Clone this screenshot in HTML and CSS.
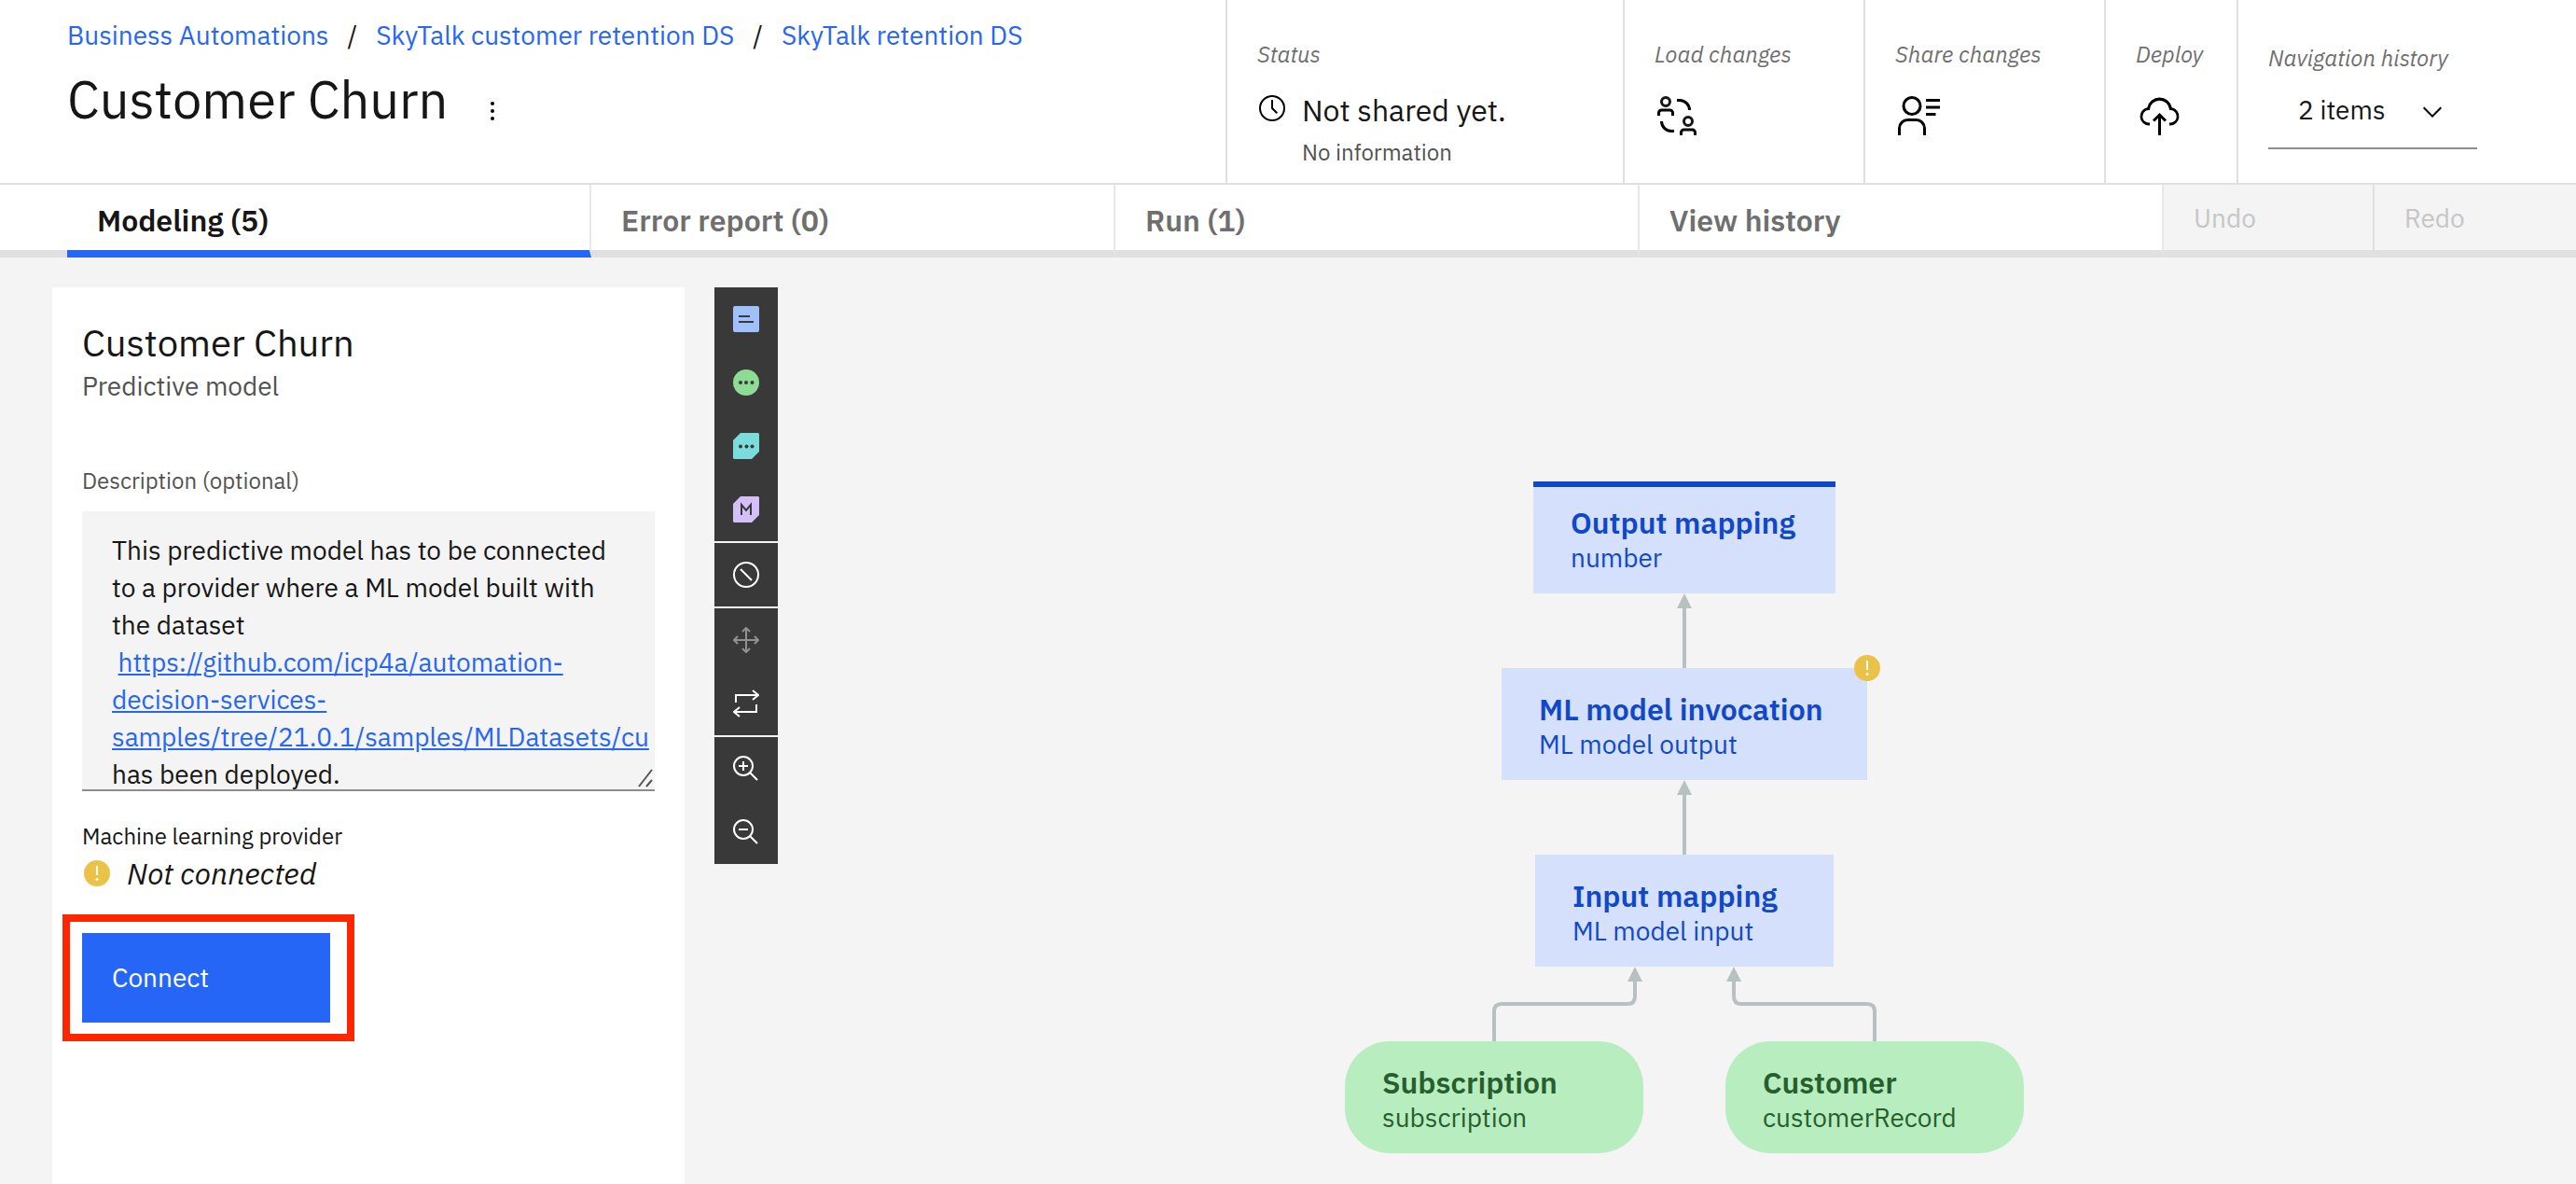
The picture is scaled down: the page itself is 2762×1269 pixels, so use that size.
FILE: index.html
```html
<!DOCTYPE html>
<html lang="en">
<head>
<meta charset="utf-8">
<title>Customer Churn</title>
<link rel="stylesheet" href="styles.css">
</head>
<body>
<header class="header">
  <div class="heading">
    <nav class="crumbs" aria-label="Breadcrumb">
      <a href="#">Business Automations</a><span>/</span><a href="#">SkyTalk customer retention DS</a><span>/</span><a href="#">SkyTalk retention DS</a>
    </nav>
    <div class="title-row">
      <h1>Customer Churn</h1>
      <button class="icon-button" type="button" aria-label="More actions">
        <svg width="32" height="32" viewBox="0 0 32 32"><circle cx="16" cy="8" r="2"/><circle cx="16" cy="16" r="2"/><circle cx="16" cy="24" r="2"/></svg>
      </button>
    </div>
  </div>
  <section class="cell cell-status">
    <h2 class="cell-label">Status</h2>
    <div class="status">
      <svg class="status-icon" width="32" height="32" viewBox="0 0 32 32"><path d="M16 30a14 14 0 1 1 14-14 14 14 0 0 1-14 14Zm0-26a12 12 0 1 0 12 12A12 12 0 0 0 16 4Z"/><path d="M20.590 22 15 16.410V7h2v8.580l5 5.010Z"/></svg>
      <span class="status-text">Not shared yet.</span>
      <span class="status-info">No information</span>
    </div>
  </section>
  <section class="cell cell-load">
    <h2 class="cell-label">Load changes</h2>
    <button class="icon-button" type="button" aria-label="Load changes">
      <svg width="48" height="48" viewBox="0 0 32 32"><path d="M26 12h-2a6 6 0 0 0-6-6h-2V4h2a8 8 0 0 1 8 8ZM4 20h2a6 6 0 0 0 6 6h2v2h-2a8 8 0 0 1-8-8Z"/><path d="M2 16v-2a3 3 0 0 1 3-3h6a3 3 0 0 1 3 3v2h-2v-2a1 1 0 0 0-1-1H5a1 1 0 0 0-1 1v2ZM18 30v-2a3 3 0 0 1 3-3h6a3 3 0 0 1 3 3v2h-2v-2a1 1 0 0 0-1-1h-6a1 1 0 0 0-1 1v2Z"/><g fill="none" stroke="#161616" stroke-width="2"><circle cx="8" cy="6" r="3"/><circle cx="24" cy="20" r="3"/></g></svg>
    </button>
  </section>
  <section class="cell cell-share">
    <h2 class="cell-label">Share changes</h2>
    <button class="icon-button" type="button" aria-label="Share changes">
      <svg width="48" height="48" viewBox="0 0 32 32"><path d="M22 4h10v2H22zM22 9h10v2H22zM22 14h7v2h-7zM12 4a5 5 0 1 1-5 5 5 5 0 0 1 5-5m0-2a7 7 0 1 0 7 7 7 7 0 0 0-7-7ZM22 30h-2v-5a5 5 0 0 0-5-5H9a5 5 0 0 0-5 5v5H2v-5a7 7 0 0 1 7-7h6a7 7 0 0 1 7 7Z"/></svg>
    </button>
  </section>
  <section class="cell cell-deploy">
    <h2 class="cell-label">Deploy</h2>
    <button class="icon-button" type="button" aria-label="Deploy">
      <svg width="48" height="48" viewBox="-1 -1 32 32"><path d="M11 18l1.410 1.410L15 16.830V29h2V16.830l2.590 2.580L21 18l-5-5-5 5Z"/><path d="M23.500 22H23v-2h.5a4.500 4.500 0 0 0 .360-9H23l-.1-.820a7 7 0 0 0-13.880 0L9 11h-.860a4.500 4.500 0 0 0 .360 9H9v2h-.5A6.500 6.500 0 0 1 7.200 9.140a9 9 0 0 1 17.600 0A6.500 6.500 0 0 1 23.500 22Z"/></svg>
    </button>
  </section>
  <section class="cell cell-history">
    <label class="cell-label" for="history">Navigation history</label>
    <div class="select">
      <select id="history"><option>2 items</option></select>
      <svg width="32" height="32" viewBox="0 0 16 16"><path d="M8 11 3 6l.7-.7L8 9.600l4.300-4.300.7.7z"/></svg>
    </div>
  </section>
</header>
<nav class="tabs">
  <button class="tab tab-active" type="button">Modeling (5)</button>
  <button class="tab" type="button">Error report (0)</button>
  <button class="tab" type="button">Run (1)</button>
  <button class="tab" type="button">View history</button>
  <button class="edit edit-undo" type="button" disabled>Undo</button>
  <button class="edit edit-redo" type="button" disabled>Redo</button>
</nav>
<main class="workspace">
  <aside class="panel">
    <h2 class="panel-title">Customer Churn</h2>
    <p class="panel-kind">Predictive model</p>
    <h3 class="field-label">Description (optional)</h3>
    <div class="description">
      This predictive model has to be connected to a provider where a ML model built with the dataset<br>&nbsp;<a href="#">https://github.com/icp4a/automation-<br>decision-services-<br>samples/tree/21.0.1/samples/MLDatasets/cu</a><br>has been deployed.
      <svg class="grip" width="16" height="20" viewBox="0 0 16 20"><path d="M1 19 15 1M9 19l6-7"/></svg>
    </div>
    <h3 class="provider-label">Machine learning provider</h3>
    <p class="provider">
      <svg width="32" height="32" viewBox="0 0 32 32"><circle class="warn" cx="16" cy="16" r="14"/><path class="warn-mark" d="M15 8h2v10h-2z"/><circle class="warn-mark" cx="16" cy="22.500" r="1.500"/></svg>
      Not connected
    </p>
    <div class="highlight"><button class="connect" type="button">Connect</button></div>
  </aside>
  <div class="toolbar" role="toolbar" aria-label="Diagram tools">
    <div class="tools">
      <button class="tool" type="button" aria-label="Decision node"><svg width="28" height="28" viewBox="0 0 28 28"><rect width="28" height="28" rx="2" fill="#a0c0fc"/><path class="ink" d="M6 10h12v2H6zM6 16h16v2H6z"/></svg></button>
      <button class="tool" type="button" aria-label="Input data node"><svg width="28" height="28" viewBox="0 0 28 28"><circle cx="14" cy="14" r="14" fill="#8edb96"/><g class="ink"><circle cx="8" cy="14" r="2"/><circle cx="14" cy="14" r="2"/><circle cx="20.500" cy="14" r="2"/></g></svg></button>
      <button class="tool" type="button" aria-label="Function node"><svg width="28" height="28" viewBox="0 0 28 28"><path fill="#7bdddb" d="M8 0h19l1 1v19l-8 8H1l-1-1V8Z"/><g class="ink"><circle cx="8" cy="14.500" r="2"/><circle cx="14.500" cy="14.500" r="2"/><circle cx="20.500" cy="14.500" r="2"/></g></svg></button>
      <button class="tool" type="button" aria-label="Predictive model node"><svg width="28" height="28" viewBox="0 0 28 28"><path fill="#d4bff8" d="M8 0h19l1 1v19l-8 8H1l-1-1V8Z"/><path d="M9 20V9l5 6 5-6v11" fill="none" stroke="#393939" stroke-width="2"/></svg></button>
    </div>
    <div class="tools">
      <button class="tool" type="button" aria-label="Disable"><svg class="line" width="28" height="28" viewBox="0 0 28 28"><circle cx="14" cy="14" r="13"/><path d="m8 8 12 12"/></svg></button>
    </div>
    <div class="tools">
      <button class="tool tool-dim" type="button" aria-label="Move"><svg class="line" width="28" height="28" viewBox="0 0 28 28"><path d="M14 1v26M1 14h26M10 5l4-4 4 4M10 23l4 4 4-4M5 10l-4 4 4 4M23 10l4 4-4 4"/></svg></button>
      <button class="tool" type="button" aria-label="Change layout"><svg class="line" width="28" height="30" viewBox="0 0 28 30"><path d="M3 14V6h24M21 1l6 5-6 5M25 16v8H1M7 19l-6 5 6 5"/></svg></button>
    </div>
    <div class="tools">
      <button class="tool" type="button" aria-label="Zoom in"><svg class="line" width="28" height="28" viewBox="0 0 28 28"><circle cx="11" cy="11" r="10"/><path d="m18 18 8 8M11 6v10M6 11h10"/></svg></button>
      <button class="tool" type="button" aria-label="Zoom out"><svg class="line" width="28" height="28" viewBox="0 0 28 28"><circle cx="11" cy="11" r="10"/><path d="m18 18 8 8M6 11h10"/></svg></button>
    </div>
  </div>
  <div class="canvas">
    <div class="diagram">
      <svg class="links" width="728" height="720" viewBox="0 0 728 720"><g class="wire"><path d="M364 200V132M364 400V332M160 600V568Q160 560 168 560H303Q311 560 311 552V532M568 600V568Q568 560 560 560H425Q417 560 417 552V532"/></g><path class="heads" d="M364 120l8 16h-16zM364 320l8 16h-16zM311 520l8 16h-16zM417 520l8 16h-16z"/></svg>
      <div class="node node-output"><strong>Output mapping</strong><span>number</span></div>
      <div class="node node-model"><strong>ML model invocation</strong><span>ML model output</span>
        <svg class="node-warning" width="32" height="32" viewBox="0 0 32 32"><circle class="warn" cx="16" cy="16" r="14"/><path class="warn-mark" d="M15 8h2v10h-2z"/><circle class="warn-mark" cx="16" cy="22.500" r="1.500"/></svg>
      </div>
      <div class="node node-input"><strong>Input mapping</strong><span>ML model input</span></div>
      <div class="node node-data node-subscription"><strong>Subscription</strong><span>subscription</span></div>
      <div class="node node-data node-customer"><strong>Customer</strong><span>customerRecord</span></div>
    </div>
  </div>
</main>
</body>
</html>
```
FILE: styles.css
```css
* { box-sizing: border-box; }
html { height: 100%; }
body {
  margin: 0;
  min-height: 100%;
  display: flex;
  flex-direction: column;
  background: #f4f4f4;
  color: #161616;
  font-family: "IBM Plex Sans", "Liberation Sans", Arial, sans-serif;
  font-size: 28px;
  line-height: 40px;
}
h1, h2, h3, p { margin: 0; font-weight: 400; }
a { color: #2566f6; }
button, select { font: inherit; color: inherit; border: 0; background: none; padding: 0; margin: 0; }
svg { display: block; flex: none; }

.header {
  display: flex;
  height: 198px;
  background: #fff;
  border-bottom: 2px solid #e0e0e0;
}
.heading { flex: 1; min-width: 0; padding: 18px 0 0 72px; white-space: nowrap; }
.crumbs { display: flex; gap: 20px; }
.crumbs a { text-decoration: none; }
.title-row { display: flex; align-items: center; gap: 32px; padding-top: 14px; }
.title-row .icon-button { padding-top: 26px; }
h1 { font-size: 56px; line-height: 68px; }
.cell { flex: none; border-left: 2px solid #e0e0e0; padding: 42px 0 0 32px; white-space: nowrap; }
.cell-status { width: 426px; }
.cell-load, .cell-share { width: 258px; }
.cell-deploy { width: 142px; }
.cell-history { width: 364px; padding-top: 46px; }
.cell-label { display: block; font-size: 24px; line-height: 32px; font-style: italic; color: #6f6f6f; }
.cell > .icon-button { display: block; padding-top: 26px; }
.status { display: grid; grid-template-columns: 48px 1fr; align-items: center; padding-top: 20px; }
.status-icon { margin-bottom: 4px; }
.status-text { font-size: 32px; line-height: 48px; }
.status-info { grid-column: 2; font-size: 24px; line-height: 42px; color: #525252; }
.select { position: relative; width: 224px; border-bottom: 2px solid #8d8d8d; }
.select select { width: 100%; height: 80px; padding-left: 32px; appearance: none; }
.select svg { position: absolute; right: 32px; top: 26px; pointer-events: none; }

.tabs {
  display: flex;
  height: 78px;
  padding-left: 72px;
  background: linear-gradient(#fff 70px, #e0e0e0 70px);
}
.tab {
  flex: 1;
  border-right: 2px solid #e8e8e8;
  border-bottom: 8px solid #e0e0e0;
  padding: 6px 0 0 32px;
  font-size: 32px;
  font-weight: 600;
  text-align: left;
  color: #6f6f6f;
}
.tab-active { color: #161616; border-bottom-color: #2566f6; }
.edit {
  width: 226px;
  border-right: 2px solid #e0e0e0;
  border-bottom: 8px solid #e0e0e0;
  background: #f4f4f4;
  padding: 2px 0 0 32px;
  text-align: left;
  color: #c6c6c6;
}
.edit-redo { width: 216px; border-right: 0; }

.workspace { flex: 1; display: flex; align-items: flex-start; gap: 32px; padding: 32px 0 0 56px; }
.panel { align-self: stretch; width: 678px; flex: none; background: #fff; padding: 30px 32px; }
.panel-title { font-size: 40px; line-height: 58px; }
.panel-kind { line-height: 36px; color: #525252; }
.field-label { padding: 66px 0 16px; font-size: 24px; line-height: 34px; color: #525252; }
.description {
  position: relative;
  height: 300px;
  padding: 22px 32px 0;
  overflow: hidden;
  background: #f4f4f4;
  border-bottom: 2px solid #8d8d8d;
}
.grip { position: absolute; right: 2px; bottom: 2px; fill: none; stroke: #555; stroke-width: 2; }
.provider-label { padding-top: 32px; font-size: 24px; line-height: 32px; }
.provider { display: flex; align-items: center; gap: 16px; font-size: 32px; line-height: 48px; font-style: italic; }
.highlight { display: inline-block; margin: 20px 0 0 -21px; border: 8px solid #fe2600; padding: 12px 18px 12px 13px; }
.connect { display: block; width: 266px; height: 96px; padding-left: 32px; background: #2566f6; color: #fff; text-align: left; }
.warn { fill: #ebc248; }
.warn-mark { fill: #fff; }

.toolbar { display: flex; flex-direction: column; gap: 2px; width: 68px; flex: none; }
.tools { display: flex; flex-direction: column; background: #393939; }
.tool { display: flex; align-items: center; justify-content: center; height: 68px; }
.tool-dim { opacity: 0.45; }
.ink { fill: #393939; }
.line { fill: none; stroke: #fff; stroke-width: 2; }

.canvas { flex: 1; display: flex; justify-content: center; padding: 208px 16px 0 0; }
.diagram { position: relative; width: 728px; height: 720px; }
.links { position: absolute; inset: 0; }
.wire { fill: none; stroke: #b8c1c1; stroke-width: 4; }
.heads { fill: #b8c1c1; }
.node {
  position: absolute;
  height: 120px;
  padding: 24px 40px 0;
  background: #d4e0fc;
  color: #1048c8;
  white-space: nowrap;
}
.node strong { display: block; font-size: 32px; line-height: 40px; font-weight: 600; }
.node span { display: block; line-height: 36px; }
.node-output { left: 202px; top: 0; width: 324px; border-top: 6px solid #1048c8; padding-top: 18px; }
.node-model { left: 168px; top: 200px; width: 392px; }
.node-input { left: 204px; top: 400px; width: 320px; }
.node-data { top: 600px; width: 320px; border-radius: 48px; background: #b7edbf; color: #275e2d; }
.node-subscription { left: 0; }
.node-customer { left: 408px; }
.node-warning { position: absolute; right: -16px; top: -16px; }
```
